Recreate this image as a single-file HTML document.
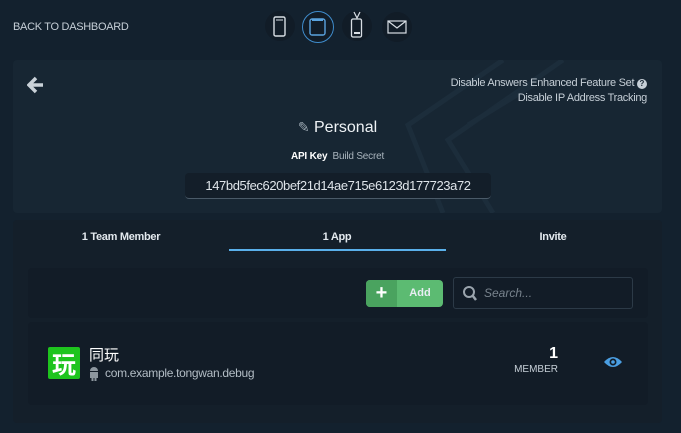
<!DOCTYPE html>
<html><head><meta charset="utf-8"><style>
*{margin:0;padding:0;box-sizing:border-box}
body{width:681px;height:433px;background:#13212e;font-family:"Liberation Sans",sans-serif;color:#e8eef3;position:relative;overflow:hidden}
.abs{position:absolute}
.back{left:13px;top:21px;font-size:11px;color:#c5ced6;letter-spacing:-0.3px}
.panel{left:13px;top:60px;width:649px;height:153px;background:#172633;border-radius:4px;overflow:hidden}
.tabs{left:13px;top:220px;width:649px;height:203px;background:#141f2a;border-radius:4px}
.tab{top:11px;font-size:11px;font-weight:bold;color:#e3e9ee;text-align:center;width:216px;letter-spacing:-0.3px}
.inner1{left:28px;top:268px;width:620px;height:50px;background:#121c27;border-radius:4px}
.inner2{left:28px;top:322px;width:620px;height:83px;background:#121c27;border-radius:4px}
</style></head><body>
<div class="abs back">BACK TO DASHBOARD</div>
<div class="abs" style="left:265px;top:11px;width:30px;height:30px;border-radius:50%;background:#111c27"></div>
<svg class="abs" style="left:272px;top:15px" width="16" height="24"><rect x="2" y="2" width="11" height="19" rx="1.5" fill="none" stroke="#d8dee4" stroke-width="1.4"/><line x1="4" y1="5" x2="11" y2="5" stroke="#d8dee4"/></svg>
<div class="abs" style="left:302px;top:11px;width:32px;height:32px;border-radius:50%;border:1.5px solid #3f8ccc;background:#111c27"></div>
<svg class="abs" style="left:308px;top:17px" width="20" height="20"><rect x="2" y="2" width="15" height="16" rx="2" fill="none" stroke="#5aa3df" stroke-width="1.4"/><line x1="4" y1="3" x2="15" y2="3" stroke="#5aa3df" stroke-width="2"/></svg>
<div class="abs" style="left:342px;top:11px;width:30px;height:30px;border-radius:50%;background:#111c27"></div>
<svg class="abs" style="left:349px;top:10px" width="16" height="30"><path d="M5 2l3 6 3-6" fill="none" stroke="#d8dee4" stroke-width="1.2"/><rect x="2.5" y="9" width="10" height="18" rx="1.5" fill="none" stroke="#d8dee4" stroke-width="1.3"/><rect x="5" y="22" width="6" height="2" fill="#d8dee4"/></svg>
<div class="abs" style="left:382px;top:12px;width:30px;height:30px;border-radius:50%;background:#111c27"></div>
<svg class="abs" style="left:387px;top:20px" width="20" height="14"><rect x="1" y="1" width="18" height="12" fill="none" stroke="#d8dee4" stroke-width="1.2"/><path d="M1 1l9 7 9-7" fill="none" stroke="#d8dee4" stroke-width="1.2"/></svg>

<div class="abs panel">
<svg class="abs" style="left:360px;top:0" width="290" height="153"><g fill="none" stroke="#1c2d3b" stroke-width="5"><path d="M130 0 L35 65 L70 153"/><path d="M190 0 L75 80 L120 153"/><path d="M95 65 L160 25"/></g></svg>
<svg class="abs" style="left:14px;top:16px" width="18" height="18"><path d="M9 2 L2 9 L9 16 M3 9 H16" fill="none" stroke="#c9d1d8" stroke-width="3.5"/></svg>
<div class="abs" style="right:15px;top:16px;font-size:11px;color:#c6cfd7;text-align:right;line-height:15px;letter-spacing:-0.3px">Disable Answers Enhanced Feature Set <span style="display:inline-block;width:10px;height:10px;border-radius:50%;background:#c6cfd7;color:#172633;font-size:8px;text-align:center;line-height:10px;font-weight:bold;letter-spacing:0">?</span><br>Disable IP Address Tracking</div>
<div class="abs" style="left:0;width:649px;top:59px;text-align:center;font-size:16px;color:#eef2f5"><span style="color:#9aa6b0;font-size:14px">✎</span> Personal</div>
<div class="abs" style="left:0;width:649px;top:91px;text-align:center;font-size:10px;letter-spacing:-0.2px"><b style="color:#fff">API Key</b> &nbsp;<span style="color:#aab5be">Build Secret</span></div>
<div class="abs" style="left:172px;top:113px;width:306px;height:26px;background:#131e29;border-radius:4px;border-bottom:1px solid #4a5a68;font-size:13px;color:#dfe5ea;text-align:center;line-height:25px;letter-spacing:-0.4px">147bd5fec620bef21d14ae715e6123d177723a72</div>
</div>

<div class="abs tabs">
<div class="abs tab" style="left:0">1 Team Member</div>
<div class="abs tab" style="left:216px">1 App</div>
<div class="abs tab" style="left:432px">Invite</div>
<div class="abs" style="left:216px;top:29px;width:217px;height:2px;background:#5ab0ea"></div>
</div>
<div class="abs inner1">
<div class="abs" style="left:338px;top:12px;width:77px;height:27px;background:#5cbb72;border-radius:4px;overflow:hidden"><div style="width:31px;height:27px;background:#4aa35f;color:#fff;font-size:20px;font-weight:bold;text-align:center;line-height:26px">+</div><div class="abs" style="left:31px;top:0;width:46px;text-align:center;line-height:27px;font-size:11px;font-weight:bold">Add</div></div>
<div class="abs" style="left:425px;top:9px;width:180px;height:32px;border:1px solid #2c3a47;border-radius:3px"><svg class="abs" style="left:8px;top:7px" width="16" height="18"><circle cx="7" cy="7" r="5" fill="none" stroke="#9aa4ad" stroke-width="2"/><path d="M10.5 10.5 L14 15" stroke="#9aa4ad" stroke-width="2.5"/></svg><div class="abs" style="left:30px;top:8px;font-size:12px;font-style:italic;color:#78838d">Search...</div></div>
</div>
<div class="abs inner2">
<div class="abs" style="left:20px;top:25px;width:32px;height:32px;background:#1ec41e;border-radius:2px;color:#fff;font-size:24px;line-height:32px;text-align:center;font-family:'Noto Sans CJK SC',sans-serif;font-weight:bold">玩</div>
<div class="abs" style="left:61px;top:22px;font-size:15px;font-family:'Liberation Sans','Noto Sans CJK SC',sans-serif;color:#fff">同玩</div>
<svg class="abs" style="left:60px;top:44px" width="12" height="15"><path d="M2 5a4 4 0 0 1 8 0z" fill="#8d979f"/><rect x="2" y="6" width="8" height="6" fill="#8d979f"/><rect x="3.5" y="12" width="2" height="3" fill="#8d979f"/><rect x="6.5" y="12" width="2" height="3" fill="#8d979f"/></svg>
<div class="abs" style="left:77px;top:44px;font-size:12px;color:#b3bdc5;letter-spacing:-0.3px">com.example.tongwan.debug</div>
<div class="abs" style="left:480px;top:23px;width:50px;text-align:right;font-size:16px;font-weight:bold;color:#fff">1</div>
<div class="abs" style="left:470px;top:42px;width:60px;text-align:right;font-size:10px;color:#c6cfd7">MEMBER</div>
<svg class="abs" style="left:575px;top:33px" width="20" height="14"><path d="M1 7 Q10 -3 19 7 Q10 17 1 7z" fill="#4a9ee2"/><circle cx="10" cy="7" r="3.5" fill="#121c27"/><circle cx="10" cy="7" r="1.8" fill="#4a9ee2"/></svg>
</div>
</body></html>
